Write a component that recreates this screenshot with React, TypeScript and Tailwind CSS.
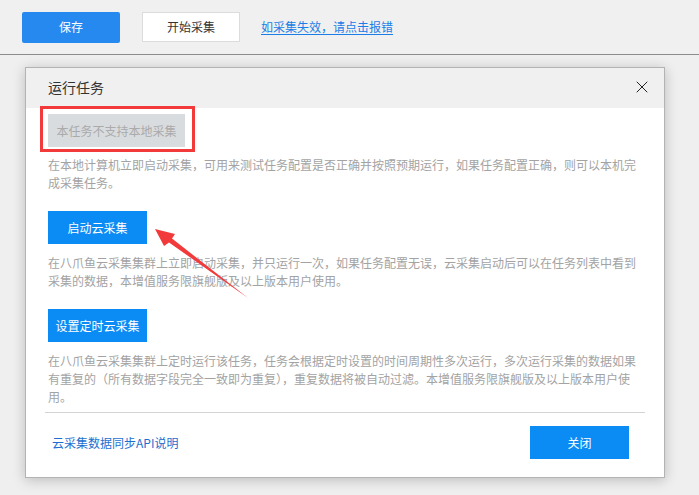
import { X } from "lucide-react";

const font = {
  fontFamily: '"Noto Sans CJK SC", "Noto Sans", sans-serif',
};

function TopBar() {
  return (
    <div className="h-[55px] bg-[#f0f0f0] border-b border-[#8c8c8c] flex items-center pl-[22px]">
      <button className="w-[98px] h-[31px] rounded-[2px] bg-[#2589f0] text-white text-[12px]">
        保存
      </button>
      <button className="ml-[22px] w-[98px] h-[30px] bg-white border border-[#dcdcdc] text-[#333] text-[12px]">
        开始采集
      </button>
      <a className="ml-[21px] text-[12px] text-[#1a7ee6] underline underline-offset-2">
        如采集失效，请点击报错
      </a>
    </div>
  );
}

function Section({
  label,
  children,
}: {
  label: string;
  children: React.ReactNode;
}) {
  return (
    <div className="mt-[19px]">
      <button className="w-[99px] h-[33px] bg-[#0b8cf5] text-white text-[12px]">
        {label}
      </button>
      <p className="mt-[10px] text-[12px] leading-[18px] text-[#a3a3a3]">
        {children}
      </p>
    </div>
  );
}

function Dialog() {
  return (
    <div className="ml-[25px] mt-[12px] w-[640px] border border-[#b3b3b3] bg-white shadow-[0_2px_12px_rgba(0,0,0,0.22)]">
      <div className="h-[40px] bg-[#f0f0f0] flex items-center justify-between pl-[22px] pr-[12px] pb-[2px]">
        <span className="text-[14px] text-[#333]">运行任务</span>
        <X className="w-[20px] h-[20px] text-[#222]" strokeWidth={1.2} />
      </div>

      <div className="pl-[22px] pr-[20px] pt-[6px] pb-[6px]">
        <div className="relative inline-block">
          <button className="w-[137px] h-[33px] bg-[#d9dcde] text-[#aaaaaa] text-[12px] cursor-not-allowed">
            本任务不支持本地采集
          </button>
          <span className="absolute -left-[8px] -top-[8px] -right-[10px] -bottom-[5px] border-[3px] border-[#f23a3a]" />
        </div>
        <p className="mt-[9px] text-[12px] leading-[18px] text-[#a3a3a3]">
          在本地计算机立即启动采集，可用来测试任务配置是否正确并按照预期运行，如果任务配置正确，则可以本机完成采集任务。
        </p>

        <Section label="启动云采集">
          在八爪鱼云采集集群上立即启动采集，并只运行一次，如果任务配置无误，云采集启动后可以在任务列表中看到采集的数据，本增值服务限旗舰版及以上版本用户使用。
        </Section>

        <Section label="设置定时云采集">
          在八爪鱼云采集集群上定时运行该任务，任务会根据定时设置的时间周期性多次运行，多次运行采集的数据如果有重复的（所有数据字段完全一致即为重复），重复数据将被自动过滤。本增值服务限旗舰版及以上版本用户使用。
        </Section>
      </div>

      <div className="mx-[19px] border-t border-[#d4d4d4]" />

      <div className="flex items-center justify-between pl-[26px] pr-[35px] pt-[13px] pb-[18px]">
        <a className="text-[12px] text-[#1c6fd0]">云采集数据同步API说明</a>
        <button className="w-[99px] h-[33px] bg-[#0b8cf5] text-white text-[12px]">
          关闭
        </button>
      </div>
    </div>
  );
}

function Arrow() {
  return (
    <svg
      className="absolute inset-0 pointer-events-none"
      width="699"
      height="495"
      viewBox="0 0 699 495"
    >
      <polygon
        points="155,229 175,234 172,238.5 248,298 169,242.5 164,246"
        fill="#f23a3a"
      />
    </svg>
  );
}

export default function App() {
  return (
    <div
      className="relative w-[699px] h-[495px] overflow-hidden bg-[#efefef]"
      style={font}
    >
      <TopBar />
      <Dialog />
      <Arrow />
    </div>
  );
}
